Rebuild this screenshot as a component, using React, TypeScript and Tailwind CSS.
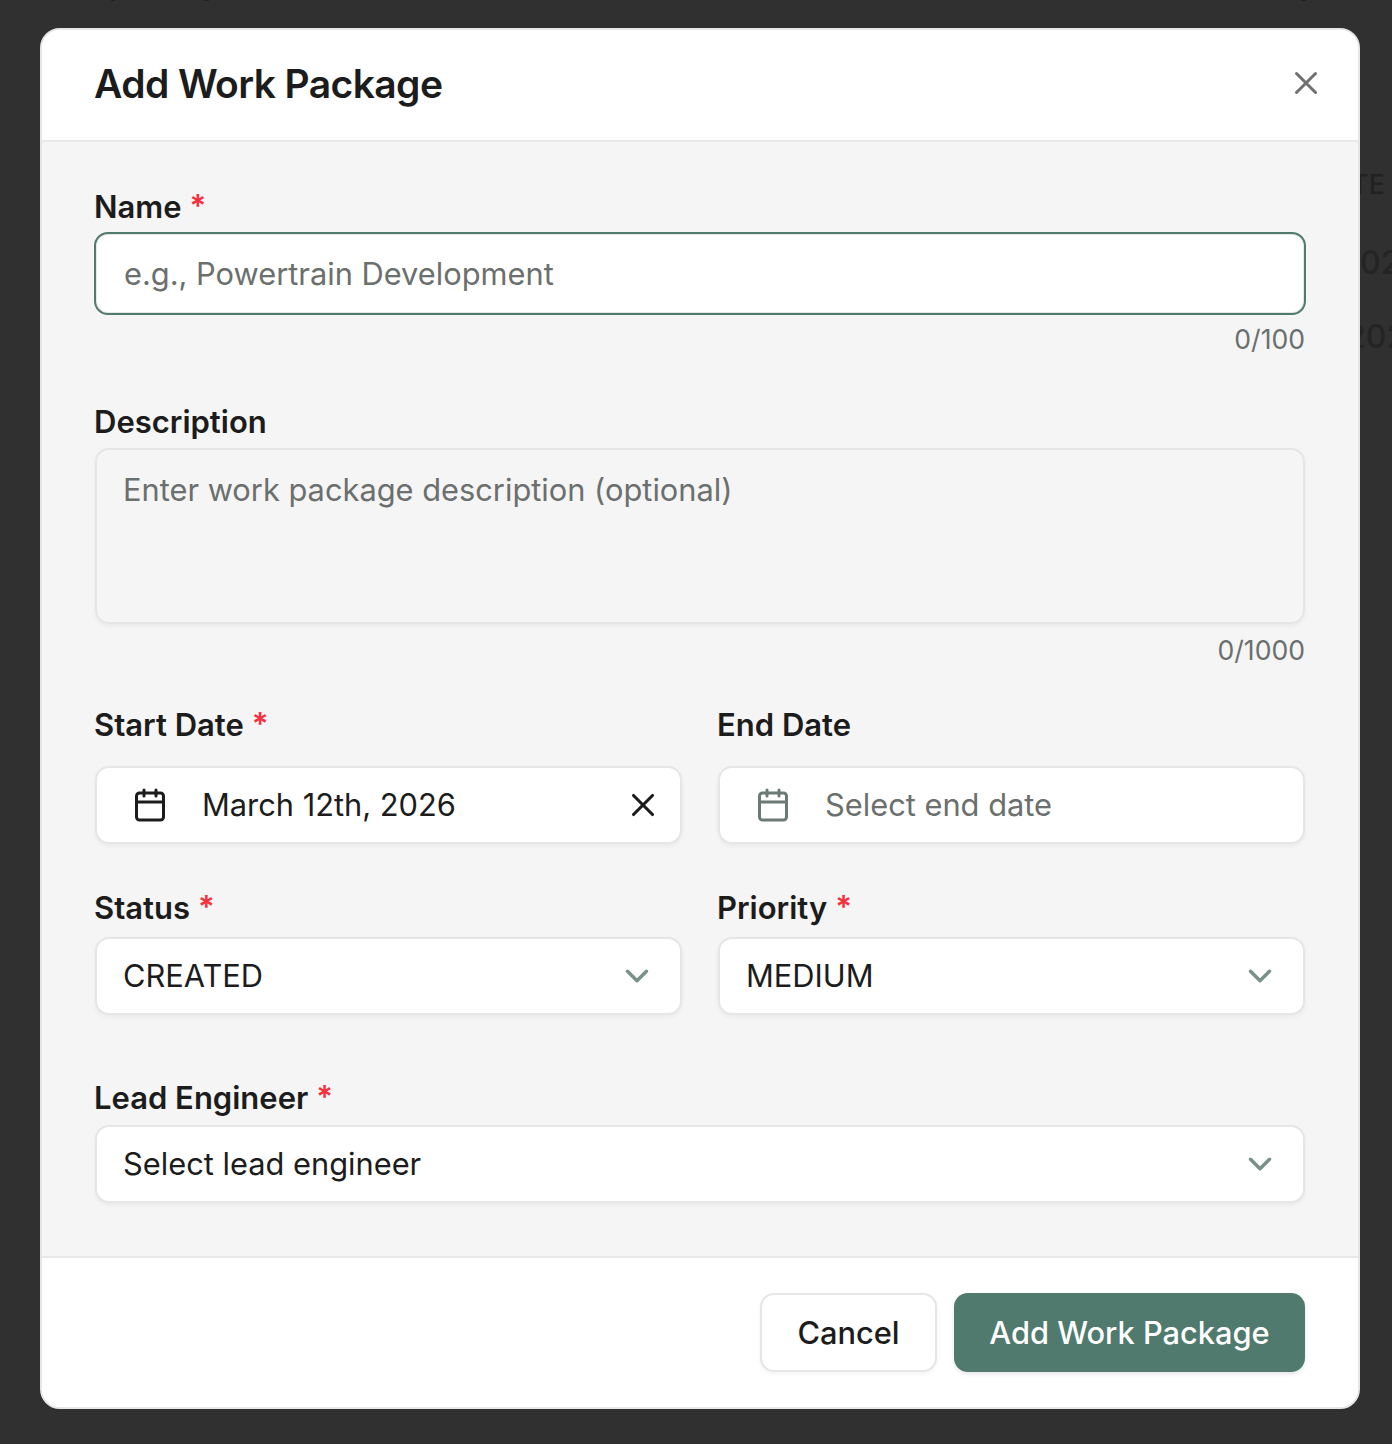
import React from 'react';
import { X, Calendar, ChevronDown } from 'lucide-react';

const Label: React.FC<{ text: string; required?: boolean; className?: string }> = ({ text, required, className }) => (
    <div className={`-ml-[1px] flex items-center h-[34px] text-[31px] font-semibold leading-[34px] text-[#1c1c1c] ${className ?? ''}`}>
        <span>{text}</span>
        {required && <span className="ml-[8px] text-[#f5303f] -mt-[2px]">*</span>}
    </div>
);

const SelectBox: React.FC<{ value: string }> = ({ value }) => (
    <div className="flex items-center justify-between h-[78px] pl-[26px] pr-[24px] bg-white border-2 border-[#e6e6e6] rounded-[14px] shadow-[0_2px_4px_rgba(0,0,0,0.05)]">
        <span className="text-[30.8px] text-[#1c1c1c]">{value}</span>
        <ChevronDown className="w-[38px] h-[38px] text-[#7a918a]" strokeWidth={2.2} />
    </div>
);

const DateBox: React.FC<{ value?: string; placeholder?: string }> = ({ value, placeholder }) => (
    <div className="flex items-center h-[78px] pl-[35px] pr-[18px] bg-white border-2 border-[#e6e6e6] rounded-[14px] shadow-[0_2px_4px_rgba(0,0,0,0.05)]">
        <Calendar className={`w-[36px] h-[36px] ${value ? 'text-[#1c1c1c]' : 'text-[#6b7a76]'}`} strokeWidth={2} />
        <span className={`ml-[34px] flex-1 text-[30.8px] ${value ? 'text-[#1c1c1c]' : 'text-[#6b6f6d]'}`}>{value ?? placeholder}</span>
        {value && <X className="w-[38px] h-[38px] text-[#1c1c1c]" strokeWidth={2} />}
    </div>
);

export default function App() {
    return (
        <div className="relative w-[1392px] h-[1444px] overflow-hidden bg-[#303030] font-['Inter',sans-serif]">
            {/* page behind the overlay */}
            <div className="absolute left-[111px] top-0 w-[4px] h-[1px] bg-[#222222]" />
            <div className="absolute left-[204px] top-0 w-[5px] h-[1px] bg-[#222222]" />
            <div className="absolute left-[1301px] top-0 w-[5px] h-[1px] bg-[#222222]" />
            <span className="absolute left-[1351px] top-[169px] text-[27px] leading-[32px] font-medium text-[#222222]">TE</span>
            <span className="absolute left-[1360px] top-[244px] text-[32px] leading-[38px] font-medium text-[#242424]">02</span>
            <span className="absolute left-[1346px] top-[318px] text-[32px] leading-[38px] font-medium text-[#242424]">202</span>

            <div className="absolute left-[40px] top-[28px] w-[1320px] h-[1381px] flex flex-col bg-[#f5f5f5] rounded-[20px] border-2 border-[#e6e6e6] overflow-hidden">
                <div className="flex items-center justify-between h-[112px] shrink-0 pl-[52px] pr-[33px] bg-white border-b-2 border-[#e8e8e8]">
                    <h2 className="mb-[2px] text-[39px] font-semibold tracking-[-0.6px] text-[#1c1c1c]">Add Work Package</h2>
                    <X className="mb-[4px] w-[38px] h-[38px] text-[#6f6f6f]" strokeWidth={1.9} />
                </div>

                <div className="flex-1 px-[53px] pt-[48px]">
                    <Label text="Name" required />
                    <div className="-mx-[1px] mt-[8px] flex items-center h-[83px] pl-[28px] pt-[2px] bg-white border-2 border-[#4f7a6d] rounded-[14px] shadow-[inset_0_0_0_1px_#e6e6e6]">
                        <span className="text-[30.8px] text-[#6b6f6d]">e.g., Powertrain Development</span>
                    </div>
                    <div className="mt-[8px] text-right text-[26.6px] leading-[32px] text-[#6b6f6d]">0/100</div>

                    <Label text="Description" className="mt-[50px]" />
                    <div className="mt-[9px] h-[176px] pl-[26px] pt-[17px] bg-[#f5f5f5] border-2 border-[#e6e6e6] rounded-[14px] shadow-[0_2px_4px_rgba(0,0,0,0.05)]">
                        <span className="text-[30.8px] text-[#6b6f6d]">Enter work package description (optional)</span>
                    </div>
                    <div className="mt-[10px] text-right text-[26.6px] leading-[32px] text-[#6b6f6d]">0/1000</div>

                    <div className="mt-[42px] grid grid-cols-2 gap-x-[36px]">
                        <div>
                            <Label text="Start Date" required />
                            <div className="mt-[24px]"><DateBox value="March 12th, 2026" /></div>
                        </div>
                        <div>
                            <Label text="End Date" />
                            <div className="mt-[24px]"><DateBox placeholder="Select end date" /></div>
                        </div>
                        <div className="mt-[47px]">
                            <Label text="Status" required />
                            <div className="mt-[12px]"><SelectBox value="CREATED" /></div>
                        </div>
                        <div className="mt-[47px]">
                            <Label text="Priority" required />
                            <div className="mt-[12px]"><SelectBox value="MEDIUM" /></div>
                        </div>
                    </div>

                    <Label text="Lead Engineer" required className="mt-[66px]" />
                    <div className="mt-[10px]"><SelectBox value="Select lead engineer" /></div>
                </div>

                <div className="flex items-center justify-end gap-[17px] h-[151px] shrink-0 px-[53px] bg-white border-t-2 border-[#e8e8e8]">
                    <button className="w-[177px] h-[79px] pt-[2px] bg-white border-2 border-[#e6e6e6] rounded-[14px] shadow-[0_2px_4px_rgba(0,0,0,0.05)] text-[30.8px] font-medium text-[#1c1c1c]">Cancel</button>
                    <button className="w-[351px] h-[79px] pt-[2px] bg-[#4f7a6d] rounded-[14px] shadow-[0_2px_4px_rgba(0,0,0,0.1)] text-[30.8px] font-medium text-white">Add Work Package</button>
                </div>
            </div>
        </div>
    );
}
